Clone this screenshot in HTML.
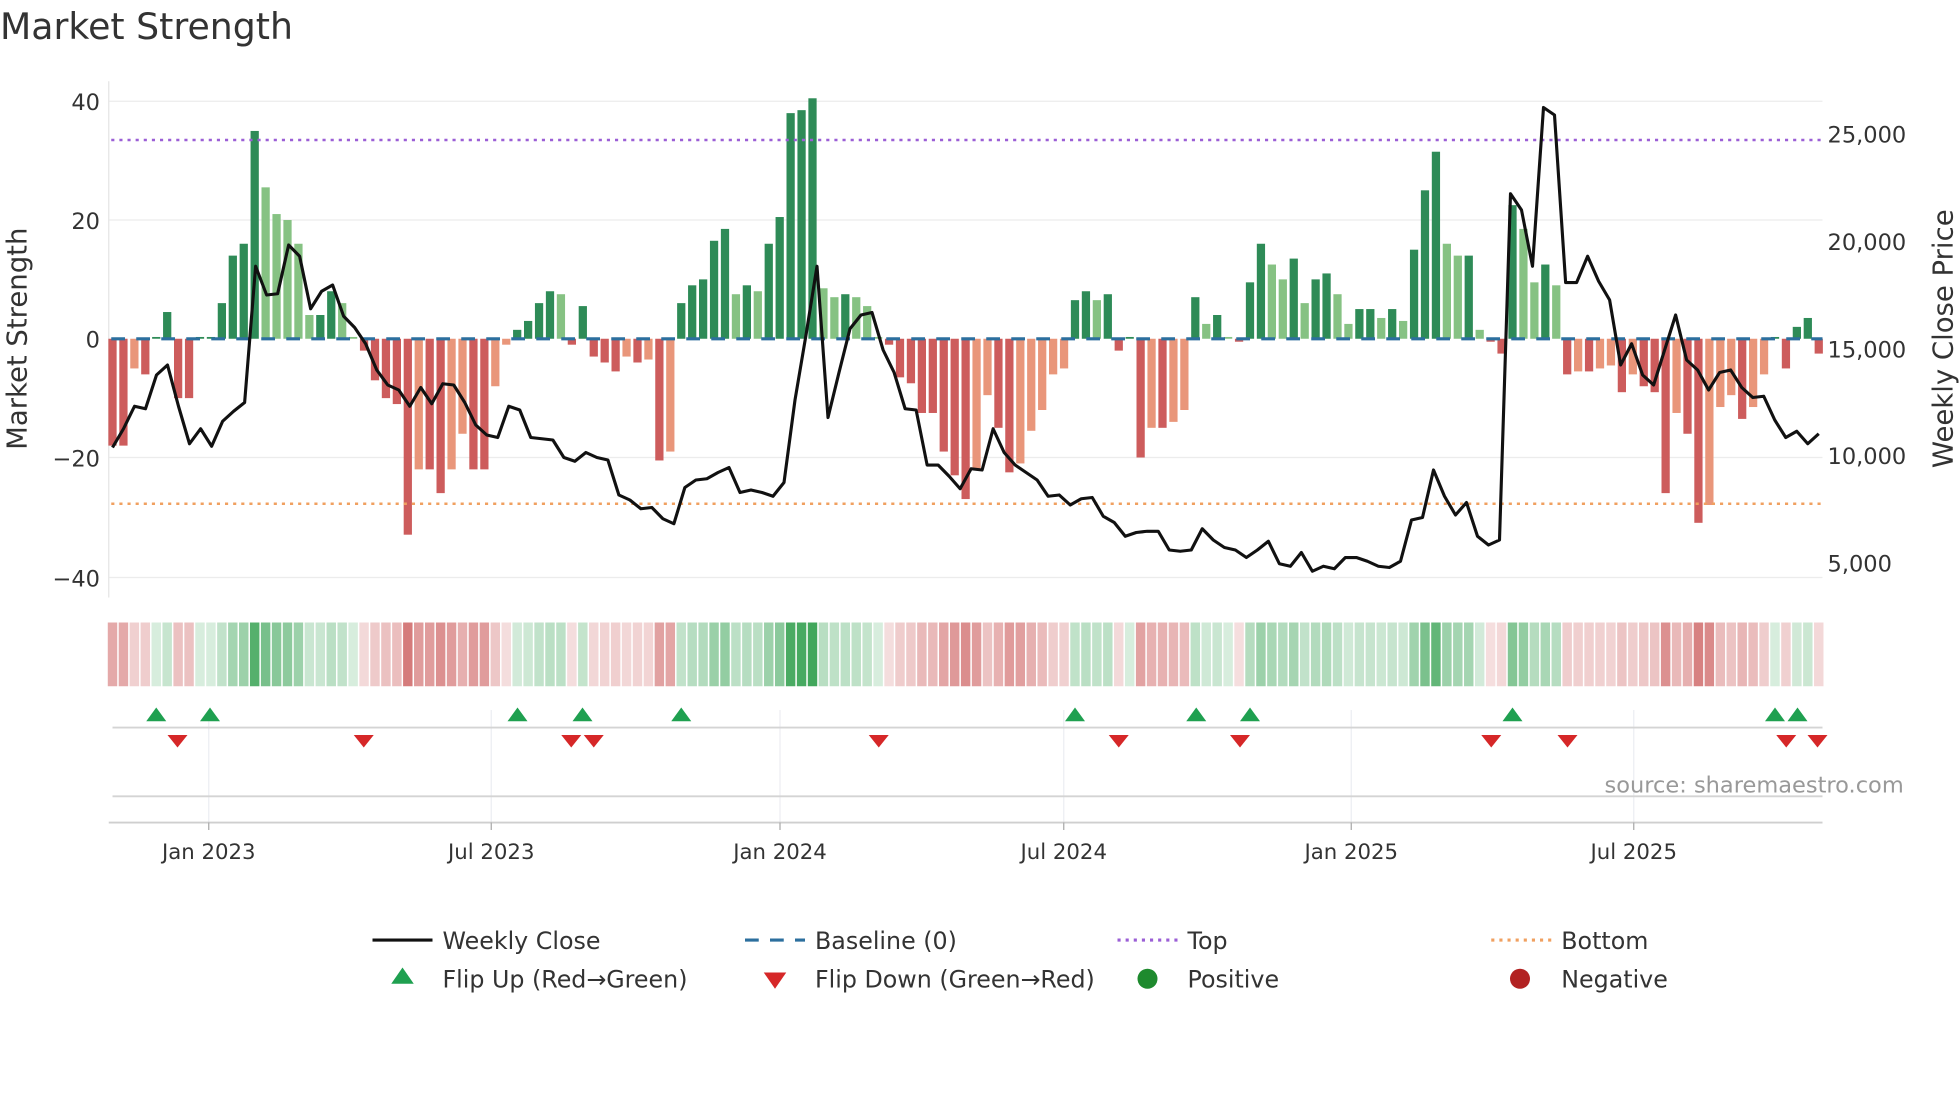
<!DOCTYPE html>
<html><head><meta charset="utf-8"><style>
html,body{margin:0;padding:0;background:#fff;width:1960px;height:1102px;overflow:hidden}
svg text{font-family:"DejaVu Sans","Liberation Sans",sans-serif;fill:#333}
</style></head><body>
<svg id="s" width="1960" height="1102" viewBox="0 0 1568 881.6" xmlns="http://www.w3.org/2000/svg">
<text x="0" y="31" font-size="29">Market Strength</text>
<g stroke="#ececec" stroke-width="1">
<line x1="87" y1="81" x2="1458" y2="81"/><line x1="87" y1="176" x2="1458" y2="176"/>
<line x1="87" y1="366" x2="1458" y2="366"/><line x1="87" y1="462" x2="1458" y2="462"/>
</g>
<line x1="87" y1="65" x2="87" y2="478" stroke="#e4e4e4"/>
<g font-size="18" text-anchor="end">
<text x="80" y="88">40</text><text x="80" y="183">20</text><text x="80" y="278">0</text><text x="80" y="373">−20</text><text x="80" y="469">−40</text>
</g>
<g font-size="18">
<text x="1462" y="114">25,000</text><text x="1462" y="200">20,000</text><text x="1462" y="286">15,000</text><text x="1462" y="371">10,000</text><text x="1462" y="457">5,000</text>
</g>
<text font-size="22" transform="translate(21,271) rotate(-90)" text-anchor="middle">Market Strength</text>
<text font-size="22" transform="translate(1562,271) rotate(-90)" text-anchor="middle">Weekly Close Price</text>
<g id="bars"></g>
<line x1="89" y1="271" x2="1458" y2="271" stroke="#2c6f9e" stroke-width="2.5" stroke-dasharray="11,9"/>
<line x1="89" y1="112" x2="1458" y2="112" stroke="#9b5fd6" stroke-width="2" stroke-dasharray="2.5,4"/>
<line x1="89" y1="403" x2="1458" y2="403" stroke="#f0a060" stroke-width="2" stroke-dasharray="2.5,4"/>
<polyline id="ln" fill="none" stroke="#111" stroke-width="2.5" stroke-linejoin="round"/>
<g id="heat"></g>
<g stroke="#eceef2" stroke-width="1">
<line x1="167" y1="568" x2="167" y2="658"/><line x1="393" y1="568" x2="393" y2="658"/><line x1="624" y1="568" x2="624" y2="658"/>
<line x1="851" y1="568" x2="851" y2="658"/><line x1="1081" y1="568" x2="1081" y2="658"/><line x1="1307" y1="568" x2="1307" y2="658"/>
</g>
<line x1="90" y1="582" x2="1458" y2="582" stroke="#d4d4d4" stroke-width="1.5"/>
<line x1="90" y1="637" x2="1458" y2="637" stroke="#d4d4d4" stroke-width="1.5"/>
<line x1="87" y1="658" x2="1458" y2="658" stroke="#cfcfcf" stroke-width="1.5"/>
<g id="flips"></g>
<text x="1523" y="634" font-size="18" text-anchor="end" style="fill:#999">source: sharemaestro.com</text>
<g stroke="#aaa"><line x1="167" y1="658" x2="167" y2="664"/><line x1="393" y1="658" x2="393" y2="664"/><line x1="624" y1="658" x2="624" y2="664"/><line x1="851" y1="658" x2="851" y2="664"/><line x1="1081" y1="658" x2="1081" y2="664"/><line x1="1307" y1="658" x2="1307" y2="664"/></g>
<g font-size="17" text-anchor="middle">
<text x="167" y="687">Jan 2023</text><text x="393" y="687">Jul 2023</text><text x="624" y="687">Jan 2024</text>
<text x="851" y="687">Jul 2024</text><text x="1081" y="687">Jan 2025</text><text x="1307" y="687">Jul 2025</text>
</g>
<g font-size="19">
<line x1="298" y1="752" x2="346" y2="752" stroke="#111" stroke-width="2.5"/><text x="354" y="759">Weekly Close</text>
<line x1="596" y1="752" x2="644" y2="752" stroke="#2c6f9e" stroke-width="2.5" stroke-dasharray="11,9"/><text x="652" y="759">Baseline (0)</text>
<line x1="894" y1="752" x2="942" y2="752" stroke="#9b5fd6" stroke-width="2.5" stroke-dasharray="2.5,4"/><text x="950" y="759">Top</text>
<line x1="1193" y1="752" x2="1241" y2="752" stroke="#f0a060" stroke-width="2.5" stroke-dasharray="2.5,4"/><text x="1249" y="759">Bottom</text>
<polygon points="322,774 313,787 331,787" fill="#1fa050"/><text x="354" y="790">Flip Up (Red→Green)</text>
<polygon points="611,778 629,778 620,791" fill="#d62728"/><text x="652" y="790">Flip Down (Green→Red)</text>
<circle cx="918" cy="783" r="8" fill="#1e8a2e"/><text x="950" y="790">Positive</text>
<circle cx="1216" cy="783" r="8" fill="#b22222"/><text x="1249" y="790">Negative</text>
</g>
</svg>
<script>
var V=[-18,-18,-5,-6,0.3,4.5,-10,-10,0.3,0.3,6,14,16,35,25.5,21,20,16,4,4,8,6,0.3,-2,-7,-10,-11,-33,-22,-22,-26,-22,-16,-22,-22,-8,-1,1.5,3,6,8,7.5,-1,5.5,-3,-4,-5.5,-3,-4,-3.5,-20.5,-19,6,9,10,16.5,18.5,7.5,9,8,16,20.5,38,38.5,40.5,8.5,7,7.5,7,5.5,0.3,-1,-6.5,-7.5,-12.5,-12.5,-19,-23,-27,-22,-9.5,-15,-22.5,-21,-15.5,-12,-6,-5,6.5,8,6.5,7.5,-2,0.3,-20,-15,-15,-14,-12,7,2.5,4,0.3,-0.5,9.5,16,12.5,10,13.5,6,10,11,7.5,2.5,5,5,3.5,5,3,15,25,31.5,16,14,14,1.5,-0.5,-2.5,22.5,18.5,9.5,12.5,9,-6,-5.5,-5.5,-5,-4.5,-9,-6,-8,-9,-26,-12.5,-16,-31,-28,-11.5,-9.5,-13.5,-11.5,-6,0.3,-5,2,3.5,-2.5];
var n=V.length,x0=90,x1=1455,dx=(x1-x0)/(n-1),NS="http://www.w3.org/2000/svg";
function el(t,a,p){var e=document.createElementNS(NS,t);for(var k in a)e.setAttribute(k,a[k]);document.getElementById(p).appendChild(e);}
for(var i=0;i<n;i++){var v=V[i],x=x0+i*dx,pv=i?V[i-1]:0;
var dark=(Math.sign(v)!=Math.sign(pv))||Math.abs(v)>=Math.abs(pv);
var c=v>0?(dark?"#2e8b57":"#86c283"):(dark?"#cd5c5c":"#e9967a");
var h=Math.abs(v)*4.75;el("rect",{x:x-3.3,y:v>0?271-h:271,width:6.6,height:Math.max(h,1),fill:c},"bars");
var a=0.18+0.7*Math.min(Math.abs(v)/40,1);var hc=v>0?"rgba(40,155,70,"+a+")":"rgba(200,80,80,"+a+")";
el("rect",{x:x-dx/2+0.6,y:498,width:dx-1.2,height:51,fill:hc},"heat");}
var Y=[358,343,325,327,300,292,325,355,343,357,337,329,322,213,236,235,196,205,247,233,228,253,262,275,296,308,312,325,310,323,307,308,322,340,348,350,325,328,350,351,352,366,369,362,366,368,396,400,407,406,415,419,390,384,383,378,374,394,392,394,397,386,320,268,213,334,298,263,252,250,280,298,327,328,372,372,381,391,375,376,343,362,372,378,384,397,396,404,399,398,413,418,429,426,425,425,440,441,440,423,432,438,440,446,440,433,451,453,442,457,453,455,446,446,449,453,454,449,416,414,376,397,412,402,429,436,432,155,168,213,86,92,226,226,205,225,240,292,275,300,308,280,252,288,296,312,298,296,310,318,317,336,350,345,355,347];
var m=Y.length,pts=[];for(var j=0;j<m;j++)pts.push((x0+j*(x1-x0)/(m-1)).toFixed(1)+","+Y[j]);
document.getElementById("ln").setAttribute("points",pts.join(" "));
[125,168,414,466,545,860,957,1000,1210,1420,1438].forEach(function(x){el("polygon",{points:(x)+",566 "+(x-8)+",577 "+(x+8)+",577",fill:"#1fa050"},"flips");});
[142,291,457,475,703,895,992,1193,1254,1429,1454].forEach(function(x){el("polygon",{points:(x-8)+",588 "+(x+8)+",588 "+x+",598",fill:"#d62728"},"flips");});
</script>
</body></html>
